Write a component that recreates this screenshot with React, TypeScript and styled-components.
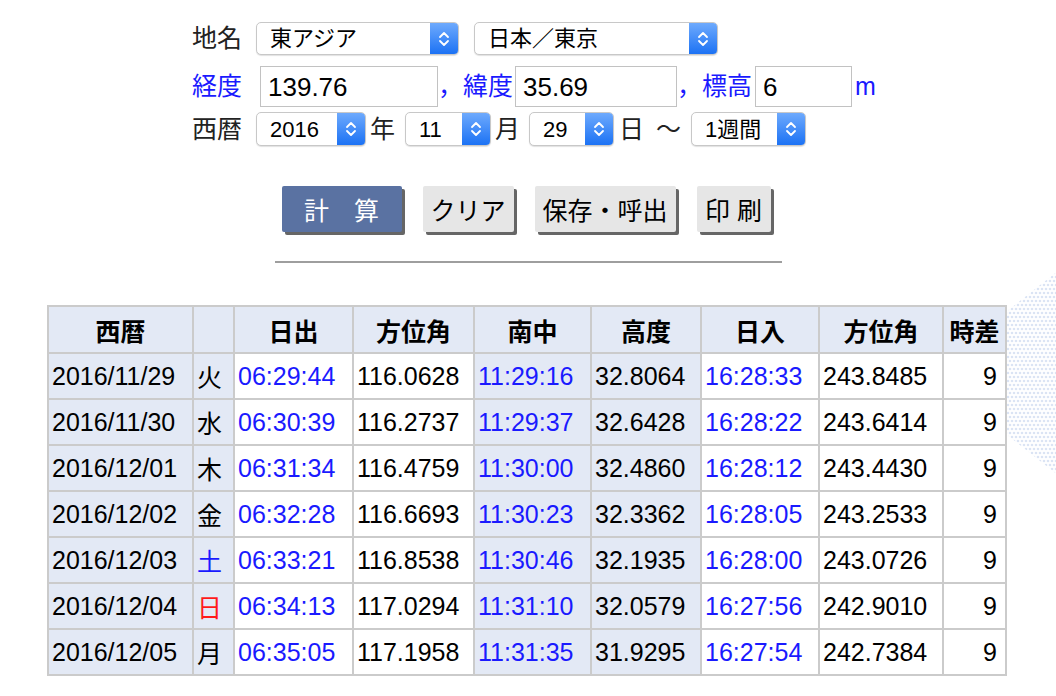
import React from "react"
import styled, { createGlobalStyle, css } from "styled-components"

const GlobalStyle = createGlobalStyle`
  body {
    margin: 0;
    background: #fff;
    font-family: "Liberation Sans", "Noto Sans CJK JP", sans-serif;
    color: #000;
  }
`

const Page = styled.div`
  position: relative;
  width: 1056px;
  min-height: 696px;
  padding-top: 22px;
  box-sizing: border-box;
  overflow: hidden;
`

const Form = styled.form`
  padding-left: 192px;
`

const Row = styled.div<{ $top: number; $h: number }>`
  display: flex;
  align-items: center;
  height: ${p => p.$h}px;
  margin-top: ${p => p.$top}px;
`

const Label = styled.span<{ $w: number; $blue?: boolean }>`
  flex: 0 0 ${p => p.$w}px;
  font-size: 25px;
  line-height: 1;
  color: ${p => (p.$blue ? "#1a1aff" : "#222")};
`

const BlueText = styled.span<{ $ml?: number; $mr?: number }>`
  font-size: 25px;
  line-height: 1;
  color: #1a1aff;
  margin-left: ${p => p.$ml ?? 0}px;
  margin-right: ${p => p.$mr ?? 0}px;
  white-space: nowrap;
`

const Unit = styled.span<{ $ml?: number; $mr?: number }>`
  font-size: 25px;
  line-height: 1;
  color: #222;
  margin-left: ${p => p.$ml ?? 4}px;
  margin-right: ${p => p.$mr ?? 10}px;
`

const TextInput = styled.input<{ $w: number }>`
  flex: 0 0 auto;
  width: ${p => p.$w}px;
  height: 41px;
  box-sizing: border-box;
  border: 1px solid #c2c2c2;
  padding: 2px 0 0 7px;
  font-family: "Liberation Sans", sans-serif;
  font-size: 26px;
  color: #000;
  outline: none;
`

const SelectBox = styled.div<{ $w: number; $h: number; $mr?: number }>`
  flex: 0 0 auto;
  display: flex;
  width: ${p => p.$w}px;
  height: ${p => p.$h}px;
  margin-right: ${p => p.$mr ?? 0}px;
  box-sizing: border-box;
  border: 1px solid #c8c8c8;
  border-radius: 5px;
  overflow: hidden;
  background: #fff;
  box-shadow: 0 1px 1px rgba(0, 0, 0, 0.12);

  select {
    flex: 1;
    min-width: 0;
    appearance: none;
    border: none;
    background: transparent;
    padding: 0 0 0 13px;
    font-family: "Liberation Sans", "Noto Sans CJK JP", sans-serif;
    font-size: 22px;
    color: #000;
    outline: none;
  }
`

const Arrow = styled.span`
  flex: 0 0 28px;
  display: flex;
  align-items: center;
  justify-content: center;
  background: linear-gradient(#6eaafd, #1c72f4);
`

const Buttons = styled.div`
  display: flex;
  justify-content: center;
  gap: 21px;
  margin-top: 40px;
  padding-right: 4px;
`

const Button = styled.button<{ $primary?: boolean; $w: number }>`
  width: ${p => p.$w}px;
  height: 46px;
  padding: 0;
  border: none;
  border-radius: 2px;
  font-family: "Liberation Sans", "Noto Sans CJK JP", sans-serif;
  font-size: 25px;
  box-shadow: 3px 3px 0 #666;
  ${p =>
    p.$primary
      ? css`
          background: #5a72a2;
          color: #fff;
        `
      : css`
          background: #e6e6e6;
          color: #000;
        `}
`

const Rule = styled.hr`
  width: 507px;
  height: 2px;
  margin: 29px auto 0;
  border: none;
  background: #9e9e9e;
`

const Table = styled.table`
  margin: 42px 0 0 47px;
  border-collapse: collapse;
  table-layout: fixed;
  border: 2px solid #cbcbcb;
  font-size: 25px;
  position: relative;
  z-index: 1;
`

const Th = styled.th`
  height: 45px;
  padding: 0;
  border: 2px solid #cbcbcb;
  background: #e3e9f5;
  font-weight: bold;
  text-align: center;
`

const Td = styled.td<{ $shade?: boolean; $color?: string; $right?: boolean }>`
  height: 44px;
  padding: ${p => (p.$right ? "0 8px 0 0" : "0 0 0 3px")};
  border: 2px solid #cbcbcb;
  background: ${p => (p.$shade ? "#e3e9f5" : "#fff")};
  color: ${p => p.$color ?? "#000"};
  text-align: ${p => (p.$right ? "right" : "left")};
  white-space: nowrap;
`

const Deco = styled.svg`
  position: absolute;
  left: 1003px;
  top: 268px;
`

const BLUE = "#1a1aff"

function Chevrons() {
  return (
    <svg width="12" height="20" viewBox="0 0 12 20">
      <path d="M2 8 L6 4 L10 8 M2 12 L6 16 L10 12" fill="none" stroke="#fff" strokeWidth="1.8" strokeLinecap="round" strokeLinejoin="round" />
    </svg>
  )
}

function Select({ value, w, h, mr }: { value: string; w: number; h: number; mr?: number }) {
  return (
    <SelectBox $w={w} $h={h} $mr={mr}>
      <select defaultValue={value}>
        <option>{value}</option>
      </select>
      <Arrow>
        <Chevrons />
      </Arrow>
    </SelectBox>
  )
}

const widths = [145, 41, 119, 121, 117, 110, 118, 124, 63]
const headers = ["西暦", "", "日出", "方位角", "南中", "高度", "日入", "方位角", "時差"]

const rows = [
  ["2016/11/29", "火", "06:29:44", "116.0628", "11:29:16", "32.8064", "16:28:33", "243.8485", "9"],
  ["2016/11/30", "水", "06:30:39", "116.2737", "11:29:37", "32.6428", "16:28:22", "243.6414", "9"],
  ["2016/12/01", "木", "06:31:34", "116.4759", "11:30:00", "32.4860", "16:28:12", "243.4430", "9"],
  ["2016/12/02", "金", "06:32:28", "116.6693", "11:30:23", "32.3362", "16:28:05", "243.2533", "9"],
  ["2016/12/03", "土", "06:33:21", "116.8538", "11:30:46", "32.1935", "16:28:00", "243.0726", "9"],
  ["2016/12/04", "日", "06:34:13", "117.0294", "11:31:10", "32.0579", "16:27:56", "242.9010", "9"],
  ["2016/12/05", "月", "06:35:05", "117.1958", "11:31:35", "31.9295", "16:27:54", "242.7384", "9"],
]

const shaded = [true, true, false, false, true, true, false, false, false]

function cellColor(col: number, text: string) {
  if (col === 1) return text === "土" ? BLUE : text === "日" ? "#ff1a1a" : "#000"
  if (col === 2 || col === 4 || col === 6) return BLUE
  return "#000"
}

function Dots() {
  const dots: React.ReactElement[] = []
  for (let y = 0; y < 212; y += 4) {
    for (let x = (y / 4) % 2 === 0 ? 0 : 2; x < 56; x += 4) {
      dots.push(<circle key={`${x}-${y}`} cx={x + 1} cy={y + 1} r="1.3" />)
    }
  }
  return (
    <Deco width="56" height="212" viewBox="0 0 56 212">
      <defs>
        <clipPath id="hex">
          <polygon points="56,2 3,44 3,166 56,208" />
        </clipPath>
      </defs>
      <g clipPath="url(#hex)" fill="#dbe4f4">
        {dots}
      </g>
    </Deco>
  )
}

export default function App() {
  return (
    <Page>
      <GlobalStyle />
      <Dots />
      <Form>
        <Row $top={0} $h={33}>
          <Label $w={64}>地名</Label>
          <Select value="東アジア" w={203} h={33} mr={15} />
          <Select value="日本／東京" w={244} h={33} />
        </Row>
        <Row $top={11} $h={41}>
          <Label $w={68} $blue>経度</Label>
          <TextInput $w={178} defaultValue="139.76" />
          <BlueText $mr={2}>，緯度</BlueText>
          <TextInput $w={162} defaultValue="35.69" />
          <BlueText $mr={3}>，標高</BlueText>
          <TextInput $w={97} defaultValue="6" />
          <BlueText $ml={3}>m</BlueText>
        </Row>
        <Row $top={5} $h={34}>
          <Label $w={64}>西暦</Label>
          <Select value="2016" w={110} h={34} />
          <Unit>年</Unit>
          <Select value="11" w={86} h={34} />
          <Unit $mr={9}>月</Unit>
          <Select value="29" w={85} h={34} />
          <Unit $ml={5} $mr={12}>日</Unit>
          <Unit $ml={0} $mr={10}>〜</Unit>
          <Select value="1週間" w={115} h={34} />
        </Row>
      </Form>

      <Buttons>
        <Button type="button" $primary $w={120}>計　算</Button>
        <Button type="button" $w={91}>クリア</Button>
        <Button type="button" $w={141}>保存・呼出</Button>
        <Button type="button" $w={74}>印 刷</Button>
      </Buttons>

      <Rule />

      <Table>
        <colgroup>
          {widths.map((w, i) => (
            <col key={i} style={{ width: w }} />
          ))}
        </colgroup>
        <thead>
          <tr>
            {headers.map((h, i) => (
              <Th key={i}>{h}</Th>
            ))}
          </tr>
        </thead>
        <tbody>
          {rows.map((r, ri) => (
            <tr key={ri}>
              {r.map((c, ci) => (
                <Td key={ci} $shade={shaded[ci]} $color={cellColor(ci, c)} $right={ci === 8}>
                  {c}
                </Td>
              ))}
            </tr>
          ))}
        </tbody>
      </Table>
    </Page>
  )
}
